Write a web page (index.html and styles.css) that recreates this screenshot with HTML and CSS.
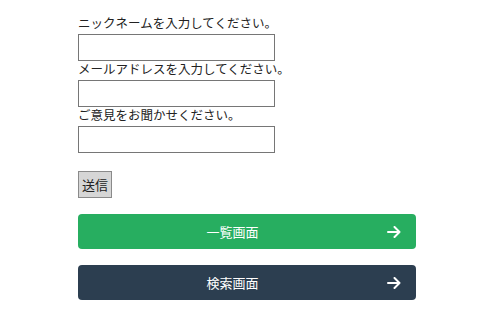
FILE: index.html
```html
<!DOCTYPE html>
<html lang="ja">
<head>
    <meta charset="UTF-8">
    <title>ご意見フォーム</title>
    <link rel="stylesheet" href="styles.css">
</head>
<body>
    <div class="container">
        <form class="form">
            <label for="nickname">ニックネームを入力してください。</label>
            <input type="text" id="nickname" class="field">
            <label for="email">メールアドレスを入力してください。</label>
            <input type="text" id="email" class="field">
            <label for="opinion">ご意見をお聞かせください。</label>
            <input type="text" id="opinion" class="field">
            <button type="button" class="submit">送信</button>
        </form>

        <a class="nav-button list-button" href="#">
            <span class="nav-label">一覧画面</span>
            <svg class="arrow" width="14" height="12" viewBox="0 0 14 12">
                <path d="M1 6H12.5M7.5 1L12.5 6L7.5 11" fill="none" stroke="#ffffff" stroke-width="2" stroke-linecap="round" stroke-linejoin="round"/>
            </svg>
        </a>
        <a class="nav-button search-button" href="#">
            <span class="nav-label">検索画面</span>
            <svg class="arrow" width="14" height="12" viewBox="0 0 14 12">
                <path d="M1 6H12.5M7.5 1L12.5 6L7.5 11" fill="none" stroke="#ffffff" stroke-width="2" stroke-linecap="round" stroke-linejoin="round"/>
            </svg>
        </a>
    </div>
</body>
</html>
```

FILE: styles.css
```css
body {
    margin: 0;
    padding: 0;
    background: #ffffff;
    color: #222222;
    font-family: "Liberation Serif", "Noto Sans CJK JP", serif;
}

.container {
    width: 338px;
    margin-left: 78px;
    padding-top: 15px;
}

.form {
    display: flex;
    flex-direction: column;
    align-items: flex-start;
}

label {
    font-size: 12.5px;
    line-height: 19px;
}

.field {
    box-sizing: border-box;
    width: 197px;
    height: 27px;
    margin: 0;
    border: 1px solid #767676;
    background: #ffffff;
}

.submit {
    margin-top: 18px;
    width: 34px;
    height: 27px;
    padding: 0;
    font-family: "Noto Sans CJK JP", sans-serif;
    font-size: 13px;
    color: #222222;
    background: #d6d6d6;
    border: 1px solid #8a8a8a;
    border-radius: 0;
}

.nav-button {
    display: flex;
    align-items: center;
    height: 35px;
    margin-top: 16px;
    padding-right: 15px;
    border-radius: 4px;
    color: #ffffff;
    text-decoration: none;
    font-size: 13px;
    font-family: "Noto Sans CJK JP", sans-serif;
}

.list-button {
    background: #27ae60;
}

.search-button {
    background: #2c3e50;
}

.nav-label {
    flex: 1;
    text-align: center;
}

.arrow {
    display: block;
}
```
